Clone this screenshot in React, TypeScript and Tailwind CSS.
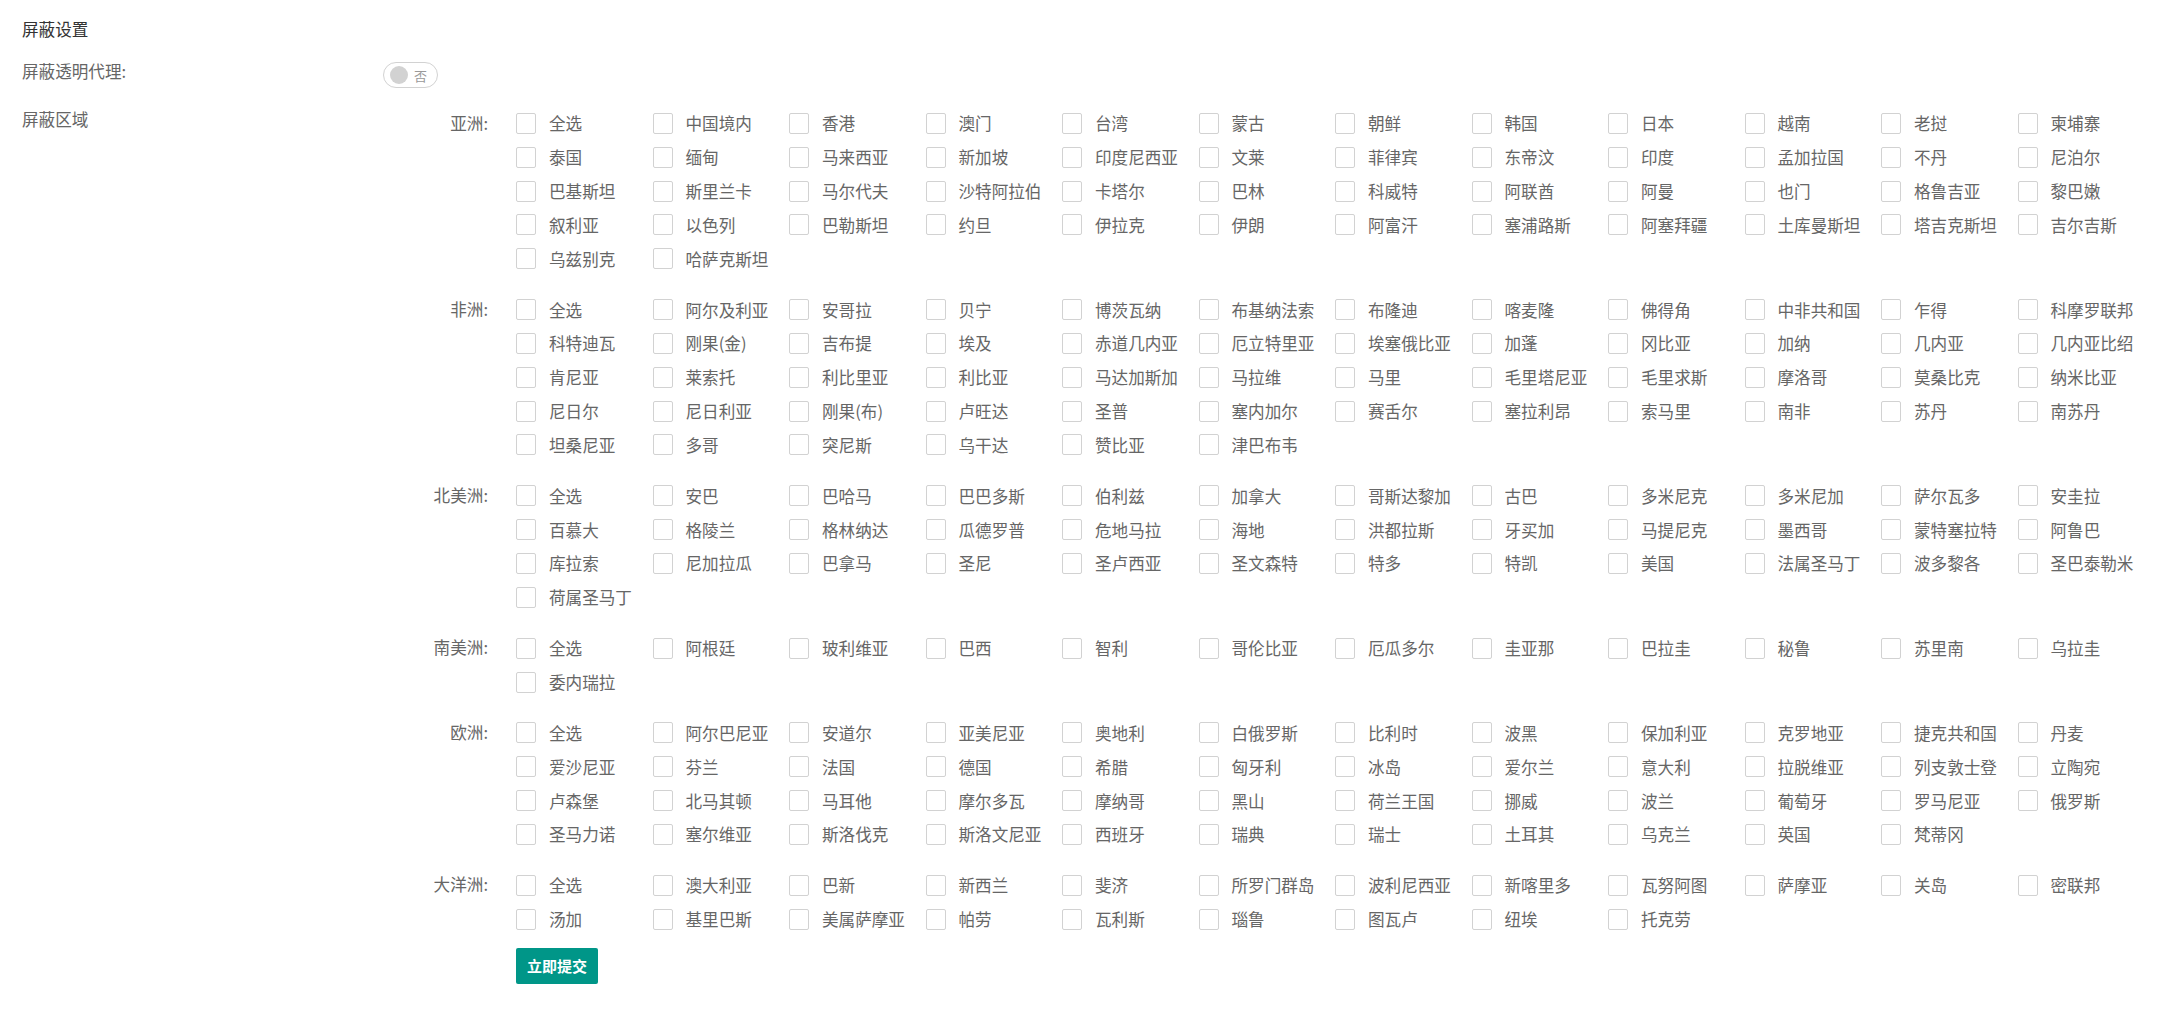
import React from "react";

const regions: { name: string; items: string[] }[] = [
  {
    name: "亚洲",
    items: [
      "全选", "中国境内", "香港", "澳门", "台湾", "蒙古", "朝鲜", "韩国", "日本", "越南", "老挝", "柬埔寨",
      "泰国", "缅甸", "马来西亚", "新加坡", "印度尼西亚", "文莱", "菲律宾", "东帝汶", "印度", "孟加拉国", "不丹", "尼泊尔",
      "巴基斯坦", "斯里兰卡", "马尔代夫", "沙特阿拉伯", "卡塔尔", "巴林", "科威特", "阿联酋", "阿曼", "也门", "格鲁吉亚", "黎巴嫩",
      "叙利亚", "以色列", "巴勒斯坦", "约旦", "伊拉克", "伊朗", "阿富汗", "塞浦路斯", "阿塞拜疆", "土库曼斯坦", "塔吉克斯坦", "吉尔吉斯",
      "乌兹别克", "哈萨克斯坦",
    ],
  },
  {
    name: "非洲",
    items: [
      "全选", "阿尔及利亚", "安哥拉", "贝宁", "博茨瓦纳", "布基纳法索", "布隆迪", "喀麦隆", "佛得角", "中非共和国", "乍得", "科摩罗联邦",
      "科特迪瓦", "刚果(金)", "吉布提", "埃及", "赤道几内亚", "厄立特里亚", "埃塞俄比亚", "加蓬", "冈比亚", "加纳", "几内亚", "几内亚比绍",
      "肯尼亚", "莱索托", "利比里亚", "利比亚", "马达加斯加", "马拉维", "马里", "毛里塔尼亚", "毛里求斯", "摩洛哥", "莫桑比克", "纳米比亚",
      "尼日尔", "尼日利亚", "刚果(布)", "卢旺达", "圣普", "塞内加尔", "赛舌尔", "塞拉利昂", "索马里", "南非", "苏丹", "南苏丹",
      "坦桑尼亚", "多哥", "突尼斯", "乌干达", "赞比亚", "津巴布韦",
    ],
  },
  {
    name: "北美洲",
    items: [
      "全选", "安巴", "巴哈马", "巴巴多斯", "伯利兹", "加拿大", "哥斯达黎加", "古巴", "多米尼克", "多米尼加", "萨尔瓦多", "安圭拉",
      "百慕大", "格陵兰", "格林纳达", "瓜德罗普", "危地马拉", "海地", "洪都拉斯", "牙买加", "马提尼克", "墨西哥", "蒙特塞拉特", "阿鲁巴",
      "库拉索", "尼加拉瓜", "巴拿马", "圣尼", "圣卢西亚", "圣文森特", "特多", "特凯", "美国", "法属圣马丁", "波多黎各", "圣巴泰勒米",
      "荷属圣马丁",
    ],
  },
  {
    name: "南美洲",
    items: [
      "全选", "阿根廷", "玻利维亚", "巴西", "智利", "哥伦比亚", "厄瓜多尔", "圭亚那", "巴拉圭", "秘鲁", "苏里南", "乌拉圭",
      "委内瑞拉",
    ],
  },
  {
    name: "欧洲",
    items: [
      "全选", "阿尔巴尼亚", "安道尔", "亚美尼亚", "奥地利", "白俄罗斯", "比利时", "波黑", "保加利亚", "克罗地亚", "捷克共和国", "丹麦",
      "爱沙尼亚", "芬兰", "法国", "德国", "希腊", "匈牙利", "冰岛", "爱尔兰", "意大利", "拉脱维亚", "列支敦士登", "立陶宛",
      "卢森堡", "北马其顿", "马耳他", "摩尔多瓦", "摩纳哥", "黑山", "荷兰王国", "挪威", "波兰", "葡萄牙", "罗马尼亚", "俄罗斯",
      "圣马力诺", "塞尔维亚", "斯洛伐克", "斯洛文尼亚", "西班牙", "瑞典", "瑞士", "土耳其", "乌克兰", "英国", "梵蒂冈",
    ],
  },
  {
    name: "大洋洲",
    items: [
      "全选", "澳大利亚", "巴新", "新西兰", "斐济", "所罗门群岛", "波利尼西亚", "新喀里多", "瓦努阿图", "萨摩亚", "关岛", "密联邦",
      "汤加", "基里巴斯", "美属萨摩亚", "帕劳", "瓦利斯", "瑙鲁", "图瓦卢", "纽埃", "托克劳",
    ],
  },
];

function Check({ label }: { label: string }) {
  return (
    <label className="flex h-[33.8px] items-center cursor-pointer">
      <span className="box-border h-[21px] w-[20px] shrink-0 rounded-[2px] border border-[#d2d2d2] bg-white" />
      <span className="ml-[13px] whitespace-nowrap text-[16.6px] leading-[20px] text-[#666]">{label}</span>
    </label>
  );
}

export default function App() {
  return (
    <div
      className="min-h-[1017px] bg-white pl-[22px] pt-[18px] text-[#666]"
      style={{ fontFamily: '"Noto Sans CJK SC", "Noto Sans", sans-serif' }}
    >
      <div className="h-[22px] text-[16.6px] leading-[22px] font-normal text-[#333]">屏蔽设置</div>

      <div className="mt-[22px] flex items-start">
        <div className="w-[361px] text-[16.6px] leading-[18px]">屏蔽透明代理:</div>
        <div className="relative box-border flex h-[26px] w-[55px] items-center rounded-full border border-[#d2d2d2] bg-white">
          <span className="ml-[6px] h-[18px] w-[18px] rounded-full bg-[#d2d2d2]" />
          <span className="ml-[6px] text-[13px] leading-none text-[#999]">否</span>
        </div>
      </div>

      <div className="mt-[18.6px] flex items-start">
        <div className="w-[361px] text-[16.6px] leading-[24px]">屏蔽区域</div>
        <div className="flex flex-col">
          {regions.map((r, i) => (
            <div key={r.name} className={i === 0 ? "flex items-start" : "mt-[17.2px] flex items-start"}>
              <div className="w-[105px] text-right text-[16.6px] leading-[33.8px] whitespace-nowrap">{r.name}:</div>
              <div className="ml-[28px] grid grid-cols-[repeat(12,136.5px)]">
                {r.items.map((it, k) => (
                  <Check key={k} label={it} />
                ))}
              </div>
            </div>
          ))}
          <div className="mt-[12px] pl-[133px]">
            <button className="h-[36px] w-[82px] rounded-[2px] bg-[#009688] text-[15px] font-bold text-white">
              立即提交
            </button>
          </div>
        </div>
      </div>
    </div>
  );
}
